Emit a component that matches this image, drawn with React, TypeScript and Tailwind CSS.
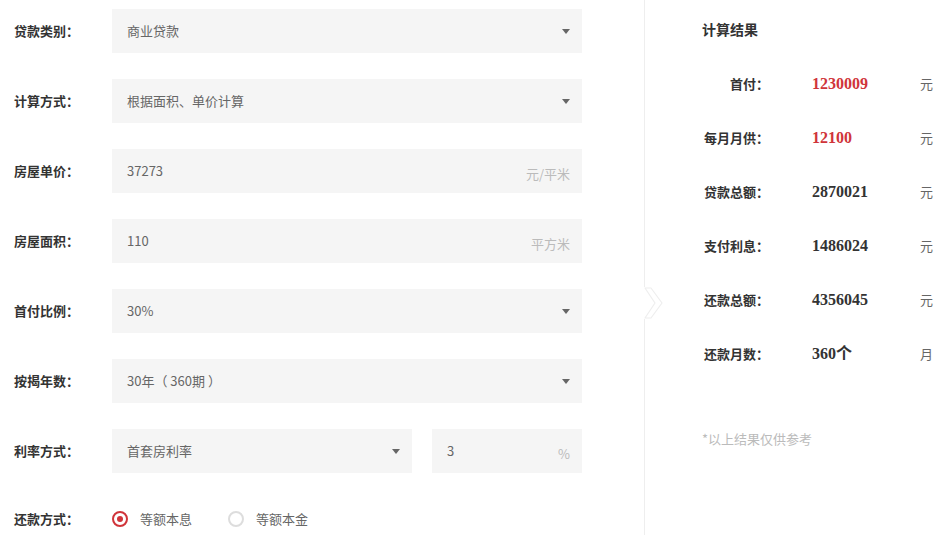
import React from "react";

const font = { fontFamily: '"Noto Sans CJK SC", "Noto Sans", sans-serif' };

const Arrow = () => (
  <svg width="8" height="5" viewBox="0 0 8 5" className="shrink-0">
    <path d="M0 0 L8 0 L4 5 Z" fill="#666" />
  </svg>
);

const Row = ({ label, children, extra = "" }: { label: string; children: React.ReactNode; extra?: string }) => (
  <div className={`flex h-[44px] items-center ${extra}`}>
    <div className="w-[112px] shrink-0 pl-[14px] text-[13px] font-bold text-[#333]">{label}</div>
    {children}
  </div>
);

const Select = ({ value, w = "w-[470px]" }: { value: string; w?: string }) => (
  <div className={`${w} flex h-[44px] items-center justify-between bg-[#f5f5f5] pl-[15px] pr-[12px] text-[13px] text-[#666]`}>
    <span className="-mt-[1px]">{value}</span>
    <Arrow />
  </div>
);

const Input = ({ value, unit, w = "w-[470px]" }: { value: string; unit: string; w?: string }) => (
  <div className={`${w} flex h-[44px] items-center justify-between bg-[#f5f5f5] pl-[15px] pr-[12px] text-[13px]`}>
    <span className="-mt-[1px] text-[#666]">{value}</span>
    <span className="mt-[6px] text-[#bbb]">{unit}</span>
  </div>
);

const Radio = ({ checked, label }: { checked: boolean; label: string }) => (
  <div className="flex items-center">
    <span
      className={`flex h-[16px] w-[16px] items-center justify-center rounded-full border-2 ${
        checked ? "border-[#d0343a]" : "border-[#ddd]"
      }`}
    >
      {checked && <span className="h-[6px] w-[6px] rounded-full bg-[#d0343a]" />}
    </span>
    <span className="ml-[12px] text-[13px] text-[#666]">{label}</span>
  </div>
);

const results = [
  { label: "首付：", value: "1230009", unit: "元", red: true },
  { label: "每月月供：", value: "12100", unit: "元", red: true },
  { label: "贷款总额：", value: "2870021", unit: "元" },
  { label: "支付利息：", value: "1486024", unit: "元" },
  { label: "还款总额：", value: "4356045", unit: "元" },
  { label: "还款月数：", value: "360个", unit: "月" },
];

export default function App() {
  return (
    <div className="flex h-[535px] w-[951px] overflow-hidden bg-white" style={font}>
      <div className="flex w-[644px] shrink-0 flex-col gap-[26px] pt-[9px]">
        <Row label="贷款类别：">
          <Select value="商业贷款" />
        </Row>
        <Row label="计算方式：">
          <Select value="根据面积、单价计算" />
        </Row>
        <Row label="房屋单价：">
          <Input value="37273" unit="元/平米" />
        </Row>
        <Row label="房屋面积：">
          <Input value="110" unit="平方米" />
        </Row>
        <Row label="首付比例：">
          <Select value="30%" />
        </Row>
        <Row label="按揭年数：">
          <Select value="30年（ 360期 ）" />
        </Row>
        <Row label="利率方式：">
          <div className="flex gap-[20px]">
            <Select value="首套房利率" w="w-[300px]" />
            <Input value="3" unit="%" w="w-[150px]" />
          </div>
        </Row>
        <Row label="还款方式：" extra="mt-[3px]">
          <div className="flex items-center gap-[36px]">
            <Radio checked label="等额本息" />
            <Radio checked={false} label="等额本金" />
          </div>
        </Row>
      </div>

      <div className="relative flex-1 border-l border-[#eee] pl-[57px]">
        <svg
          width="22"
          height="32"
          viewBox="0 0 22 32"
          className="absolute left-[-1px] top-[287px]"
        >
          <rect x="0" y="0" width="2" height="32" fill="#fff" />
          <path d="M1 1 L7 1 L18 16 L7 31 L1 31 L11 16 Z" fill="#fff" stroke="#eee" strokeWidth="1.2" strokeLinejoin="round" />
        </svg>
        <div className="pt-[19px] text-[14px] font-bold text-[#333]">计算结果</div>
        <div className="mt-[17px] flex flex-col">
          {results.map((r) => (
            <div key={r.label} className="flex h-[54px] items-center">
              <div className="w-[67px] shrink-0 text-right text-[13px] font-bold text-[#333]">{r.label}</div>
              <div
                className={`ml-[43px] w-[108px] shrink-0 text-[16px] font-bold ${r.red ? "text-[#d0343a]" : "text-[#333]"}`}
                style={{ fontFamily: '"Liberation Serif", "Noto Sans CJK SC", serif' }}
              >
                {r.value}
              </div>
              <div className="text-[13px] text-[#666]">{r.unit}</div>
            </div>
          ))}
        </div>
        <div className="mt-[48px] text-[13px] text-[#bbb]">*以上结果仅供参考</div>
      </div>
    </div>
  );
}
